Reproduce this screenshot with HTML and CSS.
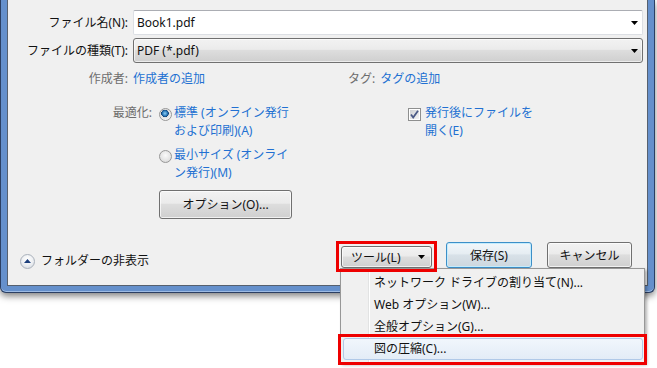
FILE: index.html
```html
<!DOCTYPE html>
<html lang="ja">
<head>
  <meta charset="UTF-8">
  <title>名前を付けて保存</title>
  <link rel="stylesheet" href="styles.css">
</head>
<body>
  <div class="window">
    <div class="client">
      <div class="fields">
        <label class="field-label" for="filename">ファイル名(N):</label>
        <div class="combo">
          <input id="filename" value="Book1.pdf">
          <svg class="arrow" width="7" height="4" viewBox="0 0 7 4"><polygon points="0,0 7,0 3.5,4" fill="#000"/></svg>
        </div>
        <label class="field-label">ファイルの種類(T):</label>
        <div class="select">
          <span class="select-text">PDF (*.pdf)</span>
          <svg class="arrow" width="7" height="4" viewBox="0 0 7 4"><polygon points="0,0 7,0 3.5,4" fill="#000"/></svg>
        </div>
      </div>

      <div class="meta">
        <span class="dim right">作成者:</span>
        <span class="link">作成者の追加</span>
        <span class="dim">タグ:</span>
        <span class="link">タグの追加</span>
      </div>

      <div class="optimize">
        <span class="dim right">最適化:</span>
        <div class="choices">
          <div class="choice">
            <span class="radio checked"></span>
            <span class="link">標準 (オンライン発行<br>および印刷)(A)</span>
          </div>
          <div class="choice">
            <span class="radio"></span>
            <span class="link">最小サイズ (オンライ<br>ン発行)(M)</span>
          </div>
          <button class="btn options">オプション(O)...</button>
        </div>
        <div class="choice open-after">
          <svg class="checkbox" width="13" height="13" viewBox="0 0 13 13">
            <defs>
              <linearGradient id="cb" x1="0" y1="0" x2="1" y2="1">
                <stop offset="0" stop-color="#cfd1d4"/>
                <stop offset="1" stop-color="#f4f4f4"/>
              </linearGradient>
            </defs>
            <rect x="0.5" y="0.5" width="12" height="12" fill="#fff" stroke="#8e8f8f"/>
            <rect x="2" y="2" width="9" height="9" fill="url(#cb)"/>
            <path d="M3 6.5 L5.2 9.5 L10 2.8" fill="none" stroke="#4b5a86" stroke-width="1.8"/>
          </svg>
          <span class="link">発行後にファイルを<br>開く(E)</span>
        </div>
      </div>

      <div class="bottom">
        <div class="folders">
          <span class="toggle">
            <svg width="7" height="4" viewBox="0 0 7 4"><polygon points="0,4 7,4 3.5,0" fill="#1d3f7c"/></svg>
          </span>
          フォルダーの非表示
        </div>
        <div class="actions">
          <div class="tool-wrap">
            <button class="btn tool">
              <span>ツール(L)</span>
              <svg width="7" height="4" viewBox="0 0 7 4"><polygon points="0,0 7,0 3.5,4" fill="#000"/></svg>
            </button>
            <ul class="menu">
              <li>ネットワーク ドライブの割り当て(N)...</li>
              <li>Web オプション(W)...</li>
              <li>全般オプション(G)...</li>
              <li class="hot">図の圧縮(C)...</li>
            </ul>
          </div>
          <button class="btn save">保存(S)</button>
          <button class="btn cancel">キャンセル</button>
        </div>
      </div>
    </div>
  </div>
</body>
</html>
```

FILE: styles.css
```css
* {
  box-sizing: border-box;
}
body {
  margin: 0;
  min-height: 368px;
  background: #fff;
  font-family: "Noto Sans", "Noto Sans CJK JP", sans-serif;
  font-size: 12px;
  color: #111;
}
.window {
  width: 655px;
  padding: 0 6px 6px;
  background: #6590cc;
  border: 1px solid #2b3f63;
  border-top: none;
  border-radius: 0 0 6px 6px;
  box-shadow: 0 3px 7px rgba(0,0,0,0.5), inset 0 -1px 0 #9dbbe3;
}
.client {
  height: 286px;
  background: #f0f0f0;
  border: 1px solid #56606e;
  border-top: none;
}
.fields {
  display: grid;
  grid-template-columns: 120px 1fr;
  column-gap: 5px;
  row-gap: 3px;
  align-items: center;
  padding: 10px 4px 0 0;
}
.field-label {
  text-align: right;
  line-height: 18px;
}
.combo {
  display: flex;
  align-items: center;
  height: 25px;
  background: #fff;
  border: 1px solid #dcdfe4;
  border-top-color: #abadb3;
  border-radius: 2px;
}
.combo input {
  flex: 1;
  border: 0;
  background: transparent;
  font: inherit;
  color: #111;
  padding: 0 0 0 3px;
  outline: none;
}
.arrow {
  margin-right: 4px;
  flex: none;
}
.select {
  display: flex;
  align-items: center;
  height: 25px;
  border: 1px solid #707070;
  border-radius: 3px;
  background: linear-gradient(#f2f2f2 0%, #ebebeb 45%, #dddddd 50%, #cfcfcf 100%);
  box-shadow: inset 0 0 0 1px rgba(255,255,255,0.6);
}
.select-text {
  flex: 1;
  padding-left: 3px;
}
.meta {
  display: grid;
  grid-template-columns: 120px 210px auto auto;
  column-gap: 5px;
  justify-content: start;
  margin-top: 7px;
  line-height: 18px;
}
.dim {
  color: #6d6d6d;
}
.right {
  text-align: right;
}
.link {
  color: #2270d2;
}
.optimize {
  display: grid;
  grid-template-columns: 144px 133px auto;
  column-gap: 7px;
  align-items: start;
  margin-top: 16px;
  line-height: 18px;
}
.choices {
  display: flex;
  flex-direction: column;
  gap: 6px;
}
.choice {
  display: flex;
  gap: 2px;
}
.radio {
  flex: none;
  width: 13px;
  height: 13px;
  margin-top: 4px;
  border-radius: 50%;
  border: 1px solid #979797;
  background: radial-gradient(circle at 50% 40%, #fafafa 0%, #e4e4e4 60%, #cfcfcf 100%);
}
.radio.checked {
  background: radial-gradient(circle at 45% 40%, #8fd0f5 0%, #2a78b8 28%, #0f3f73 40%, #dedede 44%, #f4f4f4 70%, #d0d0d0 100%);
}
.open-after {
  margin-left: 109px;
  gap: 4px;
}
.checkbox {
  flex: none;
  margin-top: 4px;
}
.btn {
  font: inherit;
  color: #111;
  padding: 0;
  border: 1px solid #707070;
  border-radius: 3px;
  background: linear-gradient(#f2f2f2 0%, #ebebeb 45%, #dddddd 50%, #cfcfcf 100%);
  box-shadow: inset 0 0 0 1px rgba(255,255,255,0.7);
}
.options {
  margin-top: 2px;
  width: 133px;
  height: 29px;
}
.bottom {
  display: flex;
  align-items: flex-start;
  margin-top: 22px;
  padding: 0 15px 0 12px;
}
.folders {
  display: flex;
  align-items: center;
  gap: 6px;
  margin-top: 11px;
  line-height: 18px;
}
.toggle {
  display: flex;
  align-items: center;
  justify-content: center;
  width: 15px;
  height: 15px;
  border-radius: 50%;
  border: 1px solid #aab1bb;
  background: radial-gradient(circle at 50% 35%, #ffffff 0%, #eef0f3 50%, #cfd5dd 100%);
}
.toggle svg {
  margin-top: -1px;
}
.actions {
  margin-left: auto;
  display: flex;
  align-items: flex-start;
}
.tool-wrap {
  position: relative;
  padding: 5px 5px 4px;
}
.tool-wrap::after {
  content: "";
  position: absolute;
  inset: 0;
  border: 3px solid #ee0000;
  z-index: 2;
}
.tool {
  display: flex;
  align-items: center;
  justify-content: space-between;
  width: 91px;
  height: 22px;
  padding: 0 6px 0 9px;
}
.save {
  margin: 1px 0 0 9px;
  width: 86px;
  height: 26px;
  border-color: #3c8fc8;
  box-shadow: inset 0 0 0 1px #c4ecfd;
  background: linear-gradient(#f1f7fb 0%, #e6edf2 45%, #d8e1e8 50%, #cdd7de 100%);
}
.cancel {
  margin: 1px 0 0 15px;
  width: 85px;
  height: 26px;
}
.menu {
  position: absolute;
  left: 4px;
  top: 27px;
  z-index: 1;
  width: 305px;
  margin: 0;
  padding: 3px 1px 2px 2px;
  list-style: none;
  border: 1px solid #979797;
  background: linear-gradient(to right, transparent 27px, #e2e3e3 27px, #e2e3e3 28px, #ffffff 28px, #ffffff 29px, transparent 29px) #f0f0f0;
  box-shadow: 2px 2px 3px rgba(0,0,0,0.3);
}
.menu li {
  height: 22px;
  line-height: 22px;
  padding-left: 31px;
  white-space: nowrap;
  color: #111;
}
.menu li.hot {
  position: relative;
  border: 1px solid #b0c9e8;
  border-radius: 3px;
  padding-left: 30px;
  line-height: 20px;
  background: linear-gradient(#f1f6fc, #e3ecf7);
}
.menu li.hot::after {
  content: "";
  position: absolute;
  top: -5px;
  left: -6px;
  right: -5px;
  bottom: -6px;
  border: 3px solid #ee0000;
}
```
